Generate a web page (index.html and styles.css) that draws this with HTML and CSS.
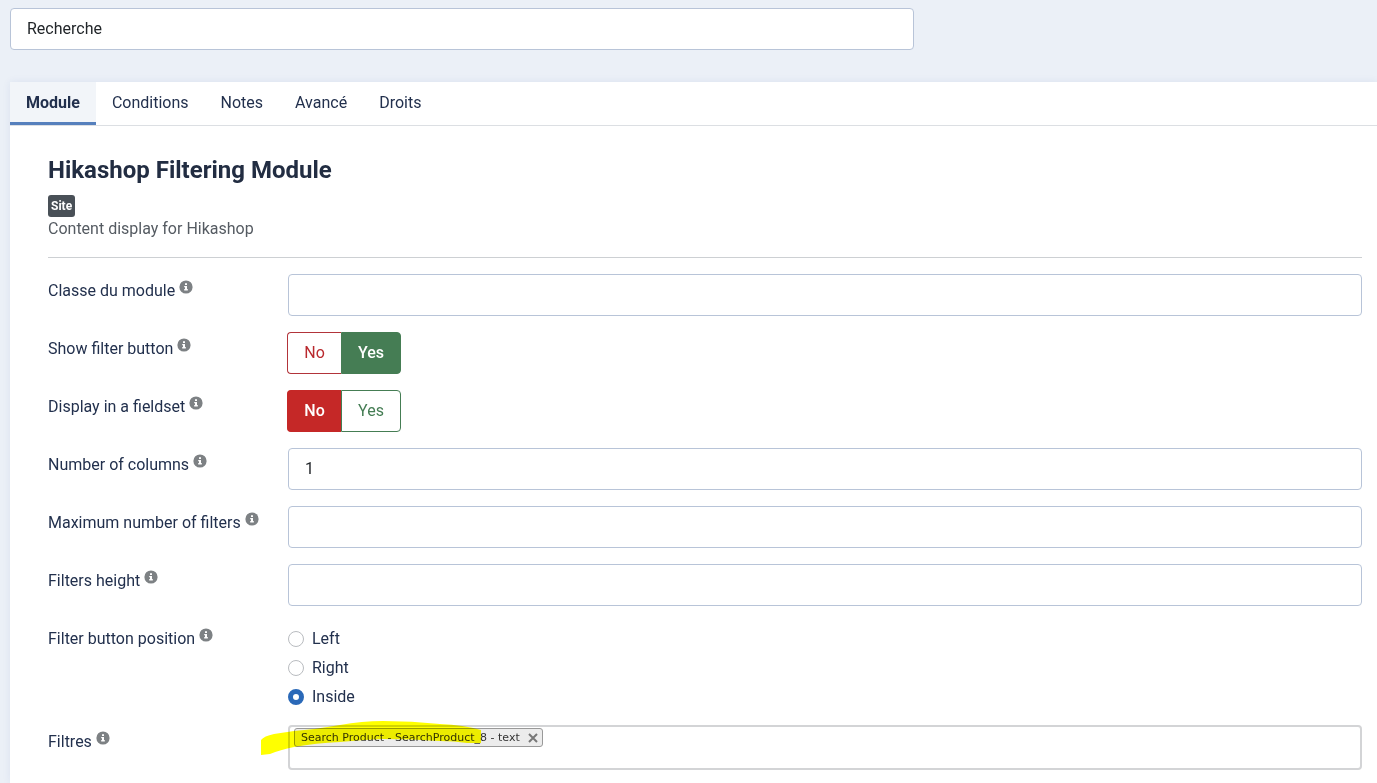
FILE: index.html
```html
<!DOCTYPE html>
<html lang="fr">
<head>
    <meta charset="utf-8">
    <title>Modules: Hikashop Filtering Module</title>
    <link rel="stylesheet" href="styles.css">
</head>
<body>
    <svg class="sprite" width="0" height="0" aria-hidden="true">
        <symbol id="info" viewBox="0 0 14 14">
            <circle cx="7" cy="7" r="6.6" fill="#7d8184"/>
            <path fill="#fff" d="M6 3.200h2v1.800H6zM5.200 5.900H8v3.100h.8v1.400H5.200V9H6V7.200h-.8z"/>
        </symbol>
    </svg>

    <form>
        <div class="title-bar">
            <input type="text" class="form-control" id="title" aria-label="Titre" value="Recherche">
        </div>

        <div class="panel">
            <nav class="tabs">
                <a href="#module" class="active">Module</a>
                <a href="#conditions">Conditions</a>
                <a href="#notes">Notes</a>
                <a href="#avance">Avancé</a>
                <a href="#droits">Droits</a>
            </nav>

            <div class="panel-body" id="module">
                <h2>Hikashop Filtering Module</h2>
                <div class="meta"><span class="badge">Site</span></div>
                <p class="description">Content display for Hikashop</p>
                <hr>

                <div class="control-group">
                    <label class="control-label" for="class">Classe du module <svg class="info"><use href="#info"/></svg></label>
                    <input type="text" class="form-control" id="class">
                </div>
                <div class="control-group">
                    <div class="control-label" id="show-label">Show filter button <svg class="info"><use href="#info"/></svg></div>
                    <div class="btn-group" role="group" aria-labelledby="show-label">
                        <button type="button" class="btn btn-no">No</button>
                        <button type="button" class="btn btn-yes selected">Yes</button>
                    </div>
                </div>
                <div class="control-group">
                    <div class="control-label" id="fieldset-label">Display in a fieldset <svg class="info"><use href="#info"/></svg></div>
                    <div class="btn-group" role="group" aria-labelledby="fieldset-label">
                        <button type="button" class="btn btn-no selected">No</button>
                        <button type="button" class="btn btn-yes">Yes</button>
                    </div>
                </div>
                <div class="control-group">
                    <label class="control-label" for="columns">Number of columns <svg class="info"><use href="#info"/></svg></label>
                    <input type="text" class="form-control" id="columns" value="1">
                </div>
                <div class="control-group">
                    <label class="control-label" for="max">Maximum number of filters <svg class="info"><use href="#info"/></svg></label>
                    <input type="text" class="form-control" id="max">
                </div>
                <div class="control-group">
                    <label class="control-label" for="height">Filters height <svg class="info"><use href="#info"/></svg></label>
                    <input type="text" class="form-control" id="height">
                </div>
                <div class="control-group">
                    <div class="control-label" id="position-label">Filter button position <svg class="info"><use href="#info"/></svg></div>
                    <div class="radios" role="radiogroup" aria-labelledby="position-label">
                        <label><input type="radio" name="position" value="left">Left</label>
                        <label><input type="radio" name="position" value="right">Right</label>
                        <label><input type="radio" name="position" value="inside" checked>Inside</label>
                    </div>
                </div>
                <div class="control-group">
                    <label class="control-label" for="filters">Filtres <svg class="info"><use href="#info"/></svg></label>
                    <div class="chosen">
                        <span class="choice">Search Product - SearchProduct_8 - text
                            <button type="button" aria-label="Remove">
                                <svg viewBox="0 0 10 10"><path d="M1 1l8 8M9 1l-8 8" stroke="#777" stroke-width="2"/></svg>
                            </button>
                        </span>
                        <input type="text" id="filters">
                        <svg class="marker" viewBox="0 0 222 36"><path fill="#ff0" d="M1 20Q4 16 14 14L34 11Q58 9 80 5Q102 1 123 1Q152 1 180 4Q204 5 221 10V23H207Q194 21 180 21Q150 19 123 19Q100 20 80 22Q56 23 34 27Q20 30 10 34L1 35Z"/></svg>
                    </div>
                </div>
            </div>
        </div>
    </form>
</body>
</html>
```
FILE: styles.css
```css
* {
    box-sizing: border-box;
}
body {
    margin: 0;
    background-color: #ebf0f7;
    color: #22304d;
    font-family: Roboto, "Liberation Sans", sans-serif;
    font-size: 16px;
    line-height: 24px;
}
.sprite {
    position: absolute;
}
form {
    display: flex;
    flex-direction: column;
    min-height: 100vh;
    padding: 8px 0 0 10px;
}
.title-bar {
    max-width: 904px;
    margin-bottom: 32px;
}
.form-control {
    display: block;
    width: 100%;
    height: 42px;
    padding: 8px 16px 10px;
    border: 1px solid #b8c4d8;
    border-radius: 4px;
    background-color: #fff;
    color: #22262a;
    font: inherit;
}

/* Tabs */
.panel {
    flex: 1;
    background-color: #fff;
    box-shadow: 0 0 8px rgba(40, 70, 150, 0.08);
}
.tabs {
    display: flex;
    border-bottom: 1px solid #dcdfe3;
}
.tabs a {
    height: 43px;
    padding: 9px 16px;
    color: #22304d;
    text-decoration: none;
}
.tabs a.active {
    background-color: #f2f5f9;
    border-bottom: 3px solid #5680bd;
    font-weight: bold;
}

.panel-body {
    padding: 28px 15px 12px 38px;
}
h2 {
    margin: 0 0 9px;
    color: #222d42;
    font-size: 24px;
    font-weight: bold;
    line-height: 32px;
}
.meta {
    display: flex;
}
.badge {
    padding: 0 3px;
    border-radius: 3px;
    background-color: #495057;
    color: #fff;
    font-size: 12px;
    font-weight: bold;
    line-height: 22px;
}
.description {
    margin: 0;
    color: #555b62;
}
hr {
    margin: 16px 0;
    border: 0;
    border-top: 1px solid #cdd0d3;
}

/* Form rows */
.control-group {
    display: grid;
    grid-template-columns: 240px 1fr;
    align-items: start;
    margin-bottom: 16px;
}
.control-group:last-child {
    margin-bottom: 0;
}
.control-label {
    padding-top: 5px;
}
.info {
    width: 14px;
    height: 14px;
    vertical-align: 2px;
}
.btn-group {
    display: flex;
    margin-left: -1px;
}
.btn {
    height: 42px;
    padding: 0;
    border: 1px solid;
    background-color: #fff;
    font: inherit;
}
.btn-no {
    width: 54px;
    border-color: #b2343a;
    border-right: 0;
    border-radius: 4px 0 0 4px;
    color: #b9292e;
}
.btn-yes {
    width: 60px;
    border-color: #457d54;
    border-radius: 0 4px 4px 0;
    color: #457d54;
}
.btn.selected {
    color: #fff;
    font-weight: 500;
}
.btn-no.selected {
    border-color: #c52827;
    background-color: #c52827;
}
.btn-yes.selected {
    background-color: #457d54;
}

.radios {
    display: grid;
    gap: 5px;
    padding-top: 5px;
}
.radios label {
    display: flex;
    align-items: center;
    gap: 8px;
}
.radios input {
    appearance: none;
    width: 16px;
    height: 16px;
    margin: 0;
    border: 1px solid #b9bcc0;
    border-radius: 50%;
    background-color: #fff;
}
.radios input:checked {
    border: 5px solid #2a69b8;
}

/* Multiple select */
.chosen {
    position: relative;
    display: flex;
    align-items: flex-start;
    height: 45px;
    padding: 1px 4px;
    border: 2px solid #d3d4d6;
    border-radius: 4px;
}
.choice {
    display: flex;
    align-items: center;
    gap: 8px;
    height: 19px;
    padding: 0 4px 0 6px;
    border: 1px solid #999;
    border-radius: 3px;
    background-color: #ececec;
    color: #333;
    font-family: "DejaVu Sans", sans-serif;
    font-size: 11px;
    line-height: 16px;
    white-space: nowrap;
}
.choice button {
    width: 10px;
    height: 10px;
    padding: 0;
    border: 0;
    background: none;
}
.choice svg {
    display: block;
}
.chosen input {
    flex: 1;
    min-width: 0;
    height: 19px;
    border: 0;
    background: none;
}
.marker {
    position: absolute;
    top: -7px;
    left: -30px;
    width: 222px;
    height: 36px;
    mix-blend-mode: multiply;
    pointer-events: none;
}
```
